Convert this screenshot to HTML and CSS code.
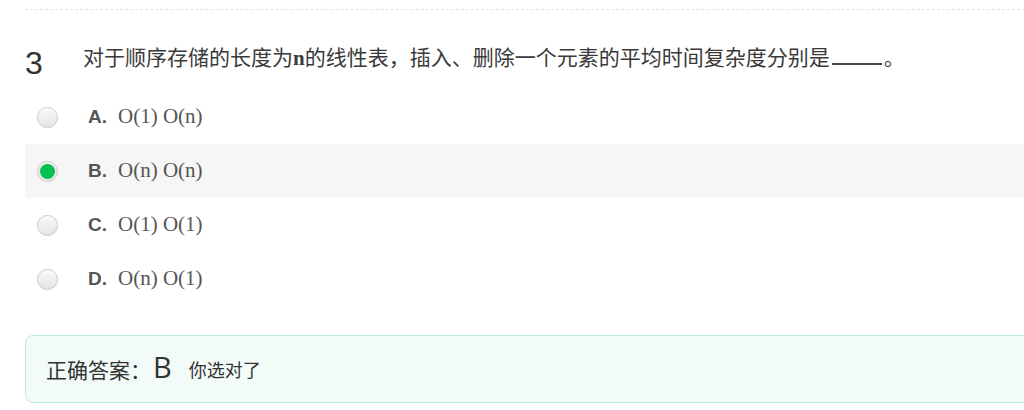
FILE: index.html
```html
<!DOCTYPE html>
<html lang="zh">
<head>
<meta charset="utf-8">
<title>题目 3</title>
<link rel="stylesheet" href="styles.css">
</head>
<body>
<div class="page">
  <div class="divider"></div>
  <div class="question">
    <span class="qnum">3</span>
    <span class="qtext">对于顺序存储的长度为<span class="latin">n</span>的线性表，插入、删除一个元素的平均时间复杂度分别是<span class="blank"></span>。</span>
  </div>
  <ul class="options">
    <li class="option"><span class="radio"></span><span class="label"><span class="letter">A.</span><span class="otext">O(1) O(n)</span></span></li>
    <li class="option selected"><span class="radio checked"></span><span class="label"><span class="letter">B.</span><span class="otext">O(n) O(n)</span></span></li>
    <li class="option"><span class="radio"></span><span class="label"><span class="letter">C.</span><span class="otext">O(1) O(1)</span></span></li>
    <li class="option"><span class="radio"></span><span class="label"><span class="letter">D.</span><span class="otext">O(n) O(1)</span></span></li>
  </ul>
  <div class="answer">
    <span class="alabel">正确答案：</span><span class="akey">B</span><span class="aresult">你选对了</span>
  </div>
</div>
</body>
</html>
```
FILE: styles.css
```css
html, body {
  margin: 0;
  padding: 0;
  background: #fff;
  overflow: hidden;
}
.page {
  width: 1020px;
  padding: 9px 0 0 25px;
  font-family: "Liberation Serif", "Noto Sans CJK SC", serif;
  color: #333;
}
.divider {
  border-top: 1px dashed #e2e2e2;
}
.question {
  height: 80px;
  display: flex;
  align-items: flex-start;
  box-sizing: border-box;
}
.qnum {
  font-family: "Liberation Sans", sans-serif;
  font-size: 32px;
  line-height: 32px;
  margin-top: 37px;
  width: 58px;
  color: #333;
}
.qtext {
  font-family: "Liberation Serif", "Noto Sans CJK SC", serif;
  font-size: 21px;
  line-height: 24px;
  margin-top: 35px;
  color: #3a3a3a;
  white-space: nowrap;
}
.latin {
  font-family: "Liberation Serif", serif;
  font-weight: bold;
}
.blank {
  display: inline-block;
  width: 50px;
  height: 18px;
  margin: 0 2px;
  border-bottom: 2px solid #444;
  vertical-align: baseline;
}
.options {
  list-style: none;
  margin: 0;
  padding: 0;
}
.option {
  height: 54px;
  display: flex;
  align-items: center;
  padding-left: 12px;
}
.option.selected {
  background: #f6f6f6;
}
.radio {
  width: 19px;
  height: 19px;
  border-radius: 50%;
  border: 1px solid #c9c9c9;
  background: linear-gradient(#fafafa, #e4e4e4);
  box-shadow: inset 0 1px 1px rgba(255,255,255,0.8), 0 0 1px rgba(0,0,0,0.08);
  margin-right: 30px;
  flex: none;
  display: flex;
  align-items: center;
  justify-content: center;
}
.radio.checked {
  background: #e8e8e8;
  border-color: #cfcfcf;
}
.radio.checked::after {
  content: "";
  width: 15px;
  height: 15px;
  border-radius: 50%;
  background: #06c150;
}
.label {
  line-height: 24px;
  white-space: nowrap;
}
.letter {
  font-family: "Liberation Sans", sans-serif;
  font-weight: bold;
  font-size: 19px;
  color: #555;
  display: inline-block;
  width: 30px;
}
.otext {
  font-family: "Liberation Serif", serif;
  font-size: 21px;
  color: #555;
}
.answer {
  margin-top: 29px;
  height: 68px;
  box-sizing: border-box;
  border: 1px solid #b9ecd8;
  border-radius: 8px;
  background: #f3fbf8;
  display: flex;
  align-items: center;
  padding-left: 20px;
  font-family: "Noto Sans CJK SC", sans-serif;
  color: #333;
}
.alabel {
  font-size: 21px;
}
.akey {
  font-family: "Open Sans", "Noto Sans", sans-serif;
  font-size: 29px;
  margin-left: 2px;
  margin-right: 17px;
  line-height: 1;
  position: relative;
  top: -3px;
}
.aresult {
  font-size: 18px;
}
```
